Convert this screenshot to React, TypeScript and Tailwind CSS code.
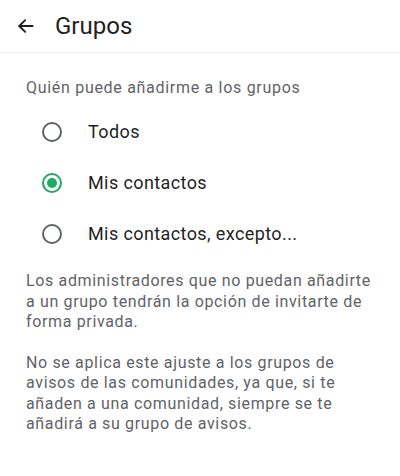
import React, { useState } from "react";

const options = ["Todos", "Mis contactos", "Mis contactos, excepto..."];

function Radio({ checked }: { checked: boolean }) {
  return (
    <span
      className={`flex h-[20px] w-[20px] items-center justify-center rounded-full border-2 ${
        checked ? "border-[#1daa61]" : "border-[#5f6368]"
      }`}
    >
      {checked && <span className="h-[10px] w-[10px] rounded-full bg-[#1daa61]" />}
    </span>
  );
}

export default function App() {
  const [selected, setSelected] = useState(1);
  return (
    <div
      className="h-[476px] w-[400px] bg-white text-[#1f1f1f]"
      style={{ fontFamily: "Roboto, 'Noto Sans', sans-serif" }}
    >
      <header className="flex h-[53px] items-center border-b border-[#f0f0f0] pl-[16px]">
        <svg width="20" height="20" viewBox="0 0 24 24" fill="none" stroke="#1f1f1f" strokeWidth="2.2" strokeLinecap="round" strokeLinejoin="round">
          <path d="M20 12H4" />
          <path d="M11 5l-7 7 7 7" />
        </svg>
        <h1 className="ml-[19px] text-[24px] font-normal leading-none text-[#1f1f1f]">Grupos</h1>
      </header>

      <section className="px-[26px] pt-[24px]">
        <h2 className="text-[16px] leading-[22px] tracking-[0.7px] text-[#5f6368]">
          Quién puede añadirme a los grupos
        </h2>
        <div className="mt-[7px] flex flex-col">
          {options.map((label, i) => (
            <button
              key={label}
              onClick={() => setSelected(i)}
              className="flex h-[51px] items-center text-left"
            >
              <span className="ml-[16px]">
                <Radio checked={selected === i} />
              </span>
              <span className="ml-[26px] text-[18px] tracking-[0.4px] text-[#1f1f1f]">{label}</span>
            </button>
          ))}
        </div>
        <p className="mt-[12px] text-[16px] leading-[20.5px] tracking-[0.65px] text-[#5f6368]">
          Los administradores que no puedan añadirte a un grupo tendrán la opción de invitarte de forma privada.
        </p>
        <p className="mt-[20px] text-[16px] leading-[20.5px] tracking-[0.65px] text-[#5f6368]">
          No se aplica este ajuste a los grupos de avisos de las comunidades, ya que, si te añaden a una comunidad, siempre se te añadirá a su grupo de avisos.
        </p>
      </section>
    </div>
  );
}
